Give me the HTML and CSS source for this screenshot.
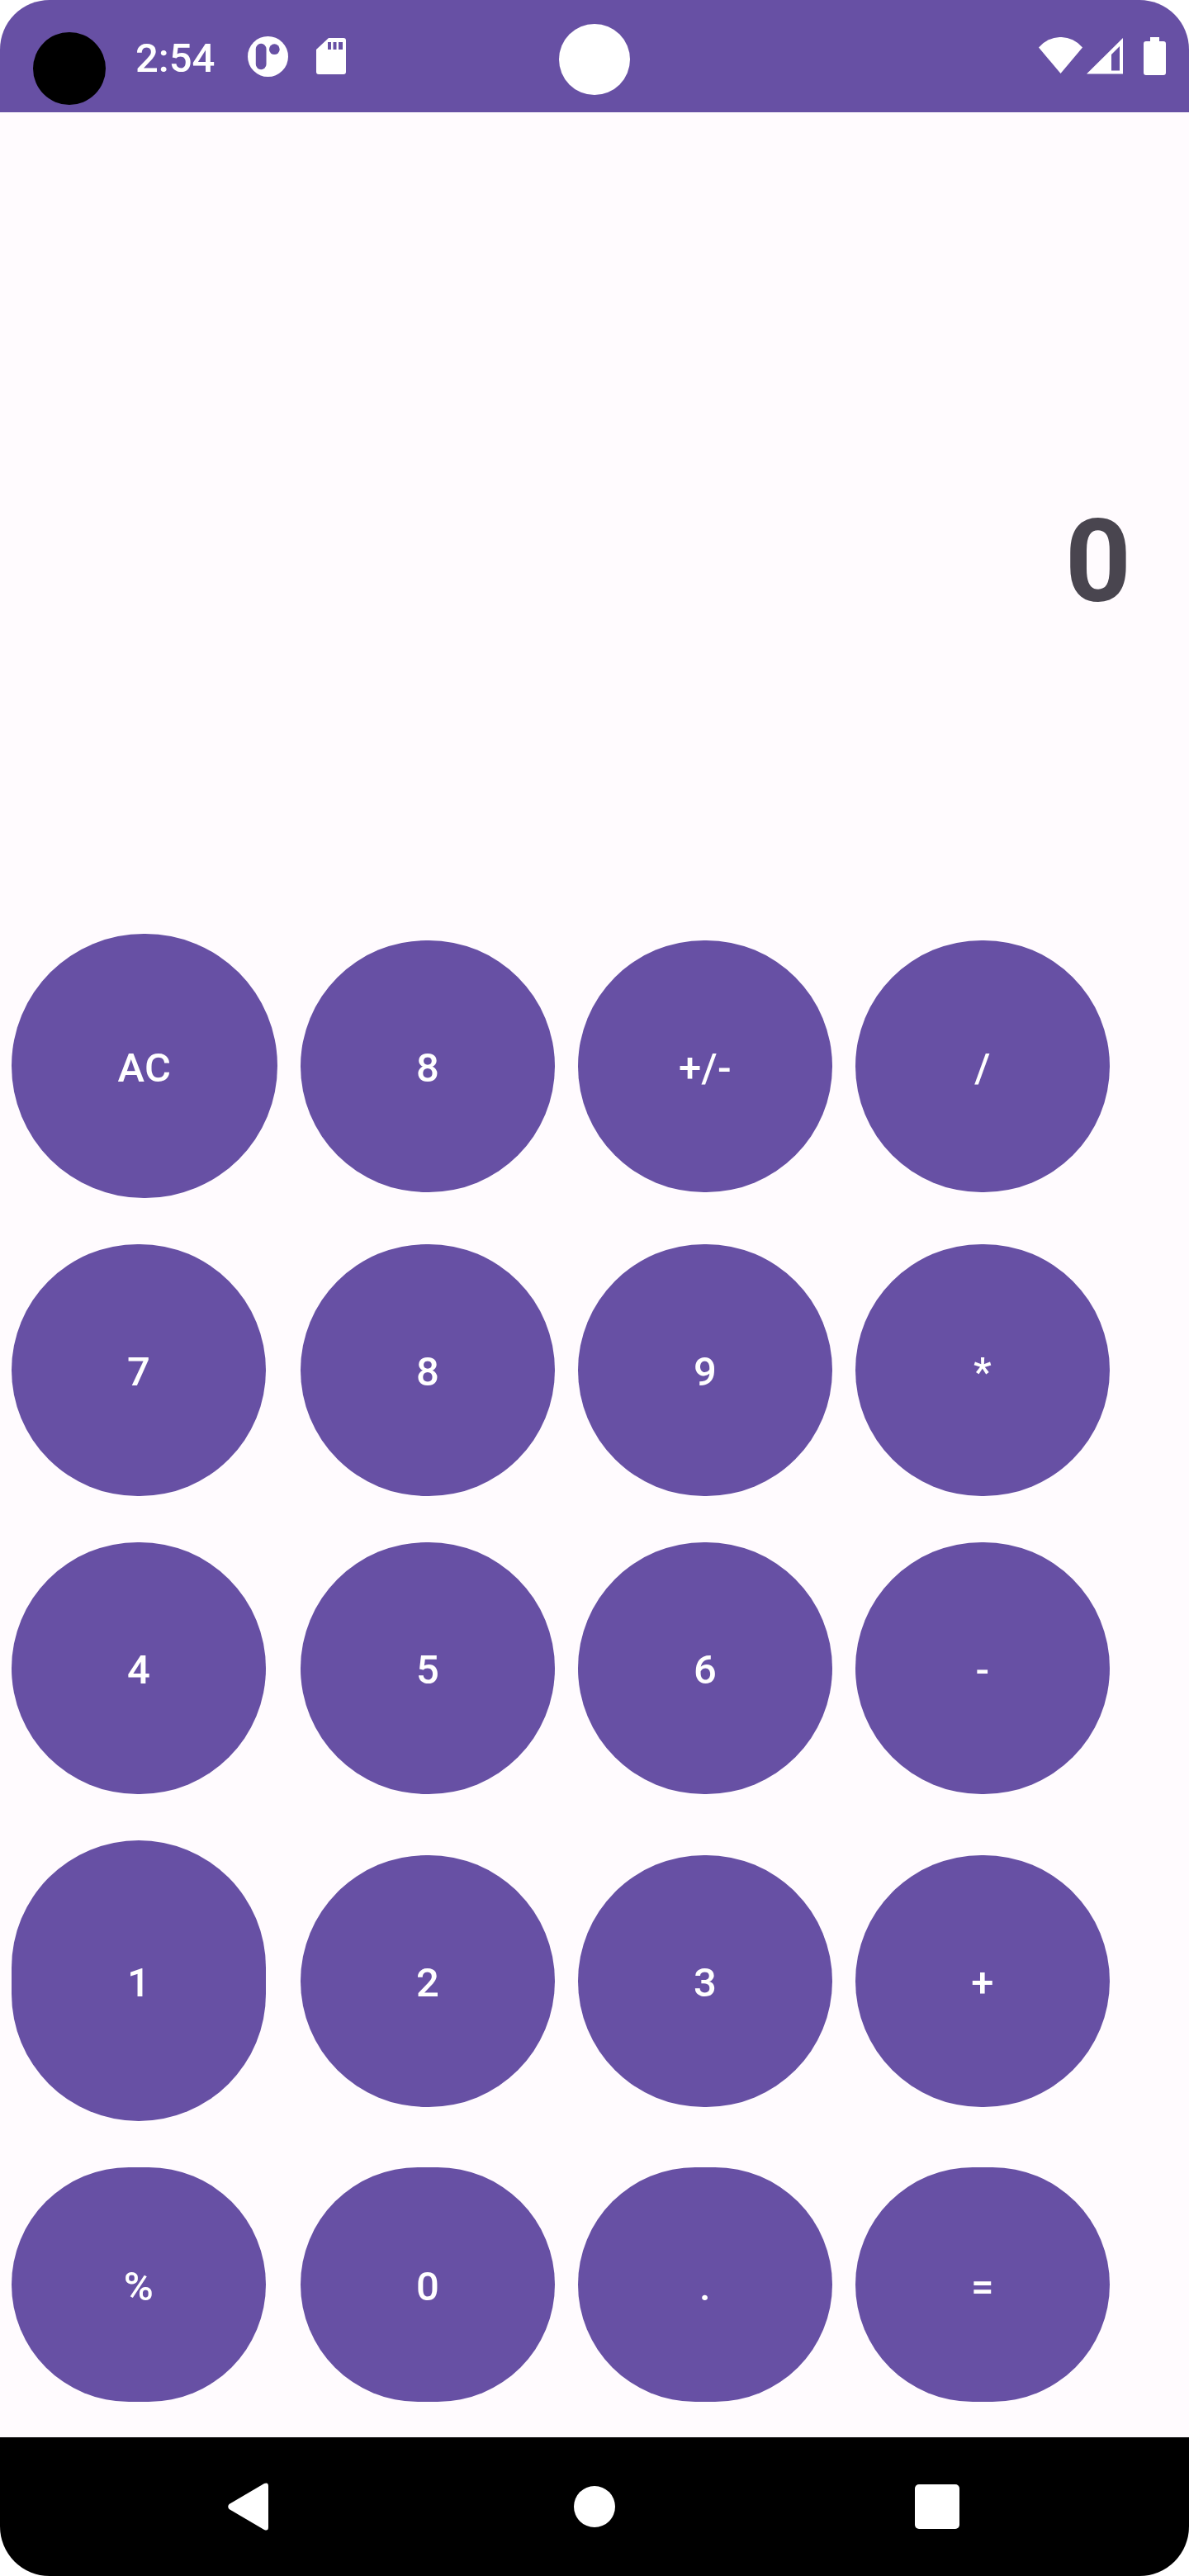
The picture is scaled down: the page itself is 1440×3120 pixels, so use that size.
FILE: index.html
```html
<!DOCTYPE html>
<html lang="en">
    <head>
        <meta charset="UTF-8">
        <meta name="viewport" content="width=device-width, initial-scale=1.0">
        <title>Calculator</title>
        <link rel="stylesheet" href="styles.css">
    </head>
<body>
    <div class="screen">
        <div class="statusbar">
            <div class="status-left">
                <div class="camera"></div>
                <span class="clock">2:54</span>
                <svg class="icon-app" width="49" height="49" viewBox="0 0 50 50">
                    <circle cx="25" cy="25" r="25" fill="#fff"/>
                    <rect x="10" y="9" width="13" height="32" rx="6.5" fill="#6750a4"/>
                    <circle cx="33" cy="16" r="6.5" fill="#6750a4"/>
                </svg>
                <svg class="icon-sd" width="36" height="44" viewBox="0 0 36 44">
                    <path d="M15 0H33Q36 0 36 3V41Q36 44 33 44H3Q0 44 0 41V14Z" fill="#fff"/>
                    <rect x="14" y="5" width="4" height="9" fill="#6750a4"/>
                    <rect x="20.5" y="5" width="4" height="9" fill="#6750a4"/>
                    <rect x="27" y="5" width="5" height="9" fill="#6750a4"/>
                </svg>
            </div>
            <div class="pill"></div>
            <div class="status-right">
                <svg class="icon-wifi" width="53" height="44" viewBox="0 0 53 44">
                    <path d="M0 12.500A34.300 34.300 0 0 1 53 12.500L26.500 44Z" fill="#fff"/>
                </svg>
                <svg class="icon-signal" width="44" height="44" viewBox="0 0 44 44">
                    <path fill-rule="evenodd" d="M0 43.500L44 0V43.500ZM30 20V39.600H40V10Z" fill="#fff"/>
                </svg>
                <svg class="icon-battery" width="27" height="46" viewBox="0 0 27 46">
                    <path d="M8 0H19V5H24Q27 5 27 8V43Q27 46 24 46H3Q0 46 0 43V8Q0 5 3 5H8Z" fill="#fff"/>
                </svg>
            </div>
        </div>

        <div class="display">
            <span class="result">0</span>
        </div>

        <div class="keypad">
            <button class="key key-wide">AC</button>
            <button class="key">8</button>
            <button class="key">+/-</button>
            <button class="key">/</button>

            <button class="key">7</button>
            <button class="key">8</button>
            <button class="key">9</button>
            <button class="key">*</button>

            <button class="key">4</button>
            <button class="key">5</button>
            <button class="key">6</button>
            <button class="key">-</button>

            <button class="key key-tall">1</button>
            <button class="key">2</button>
            <button class="key">3</button>
            <button class="key">+</button>

            <button class="key key-short">%</button>
            <button class="key key-short">0</button>
            <button class="key key-short">.</button>
            <button class="key key-short">=</button>
        </div>

        <div class="navbar">
            <svg width="50" height="58" viewBox="0 0 50 58">
                <path d="M1.500 26L44 1Q49 -1 49 4V54Q49 59 44 57L1.500 32Q-1 29 1.500 26Z" fill="#fff"/>
            </svg>
            <div class="nav-home"></div>
            <div class="nav-recents"></div>
        </div>
    </div>
</body>
</html>
```

FILE: styles.css
```css
body {
    margin: 0;
    background-color: #fff;
    font-family: 'Roboto', sans-serif;
}

.screen {
    display: flex;
    flex-direction: column;
    width: 1440px;
    height: 3120px;
    background-color: #fffbfe;
    border-radius: 60px;
    overflow: hidden;
}

.statusbar {
    display: grid;
    grid-template-columns: 1fr auto 1fr;
    align-items: center;
    height: 136px;
    background-color: #6750a4;
}

.status-left {
    display: flex;
    align-items: center;
    padding-left: 40px;
}

.camera {
    width: 88px;
    height: 88px;
    margin-top: 30px;
    background-color: #000;
    border-radius: 50%;
}

.clock {
    margin-left: 36px;
    margin-top: 4px;
    font-size: 49px;
    font-weight: 500;
    color: #fff;
}

.icon-app {
    margin-left: 40px;
}

.icon-sd {
    margin-left: 34px;
}

.pill {
    width: 86px;
    height: 86px;
    margin-top: 8px;
    background-color: #fff;
    border-radius: 50%;
}

.status-right {
    display: flex;
    align-items: center;
    justify-content: flex-end;
    padding-right: 28px;
    height: 44px;
}

.icon-wifi {
    margin-top: -2px;
}

.icon-signal {
    margin-left: 5px;
}

.icon-battery {
    margin-left: 25px;
}

.display {
    display: flex;
    justify-content: flex-end;
    align-items: center;
    box-sizing: border-box;
    height: 995px;
    padding-top: 93px;
    padding-right: 70px;
}

.result {
    font-size: 140px;
    font-weight: 700;
    color: #49454f;
}

.keypad {
    display: grid;
    grid-template-columns: 322px 308px 308px 308px;
    grid-template-rows: 320px 305px 305px 340px 284px;
    column-gap: 28px;
    row-gap: 56px;
    align-items: center;
    padding-left: 14px;
}

.key {
    width: 308px;
    height: 305px;
    padding: 4px 0 0;
    border: none;
    border-radius: 999px;
    background-color: #6750a4;
    color: #fff;
    font-family: 'Roboto', sans-serif;
    font-size: 49px;
    font-weight: 500;
    letter-spacing: 0.35px;
}

.key-wide {
    width: 322px;
    height: 320px;
}

.key-tall {
    height: 340px;
}

.key-short {
    height: 284px;
}

.navbar {
    display: grid;
    grid-template-columns: 276px 50px 369px 50px 363px 54px;
    align-items: center;
    height: 168px;
    margin-top: auto;
    background-color: #000;
}

.navbar svg {
    grid-column: 2;
}

.nav-home {
    grid-column: 4;
    width: 50px;
    height: 50px;
    background-color: #fff;
    border-radius: 50%;
}

.nav-recents {
    grid-column: 6;
    width: 54px;
    height: 54px;
    background-color: #fff;
    border-radius: 5px;
}
```
